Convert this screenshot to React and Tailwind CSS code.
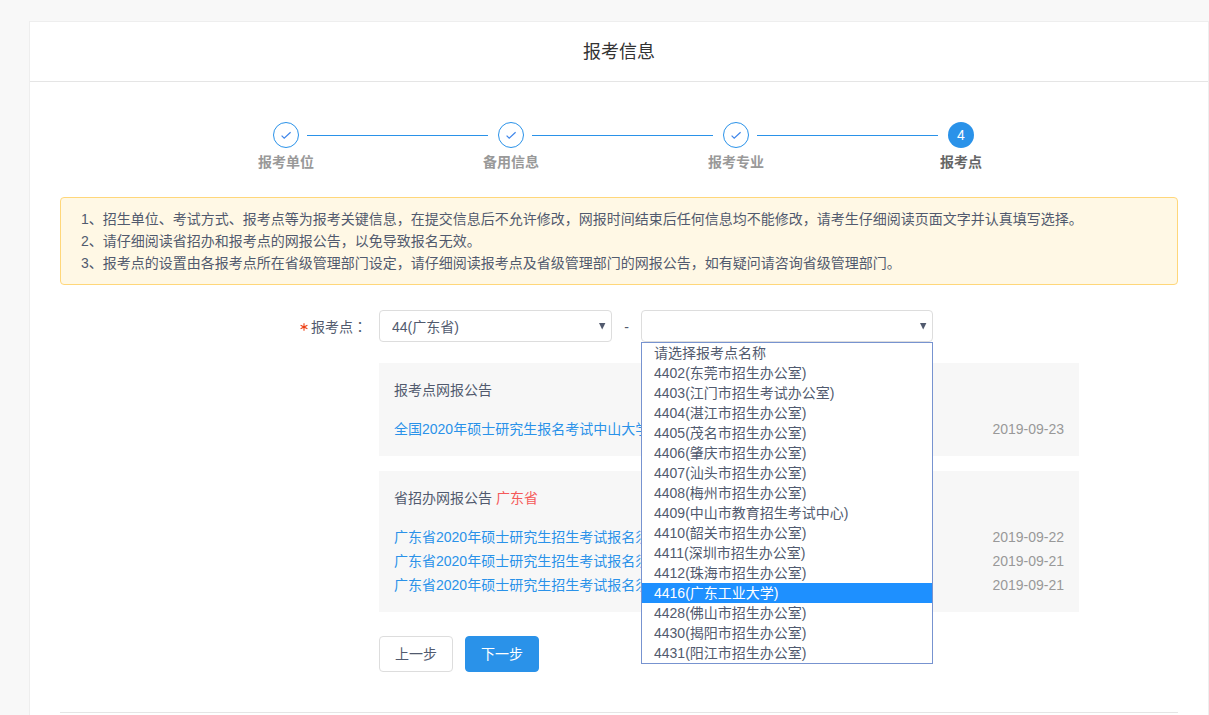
import { useState } from "react";

const steps = [
  { label: "报考单位", done: true },
  { label: "备用信息", done: true },
  { label: "报考专业", done: true },
  { label: "报考点", done: false },
];

const notes = [
  "1、招生单位、考试方式、报考点等为报考关键信息，在提交信息后不允许修改，网报时间结束后任何信息均不能修改，请考生仔细阅读页面文字并认真填写选择。",
  "2、请仔细阅读省招办和报考点的网报公告，以免导致报名无效。",
  "3、报考点的设置由各报考点所在省级管理部门设定，请仔细阅读报考点及省级管理部门的网报公告，如有疑问请咨询省级管理部门。",
];

const sites = [
  "请选择报考点名称",
  "4402(东莞市招生办公室)",
  "4403(江门市招生考试办公室)",
  "4404(湛江市招生办公室)",
  "4405(茂名市招生办公室)",
  "4406(肇庆市招生办公室)",
  "4407(汕头市招生办公室)",
  "4408(梅州市招生办公室)",
  "4409(中山市教育招生考试中心)",
  "4410(韶关市招生办公室)",
  "4411(深圳市招生办公室)",
  "4412(珠海市招生办公室)",
  "4416(广东工业大学)",
  "4428(佛山市招生办公室)",
  "4430(揭阳市招生办公室)",
  "4431(阳江市招生办公室)",
];

const siteNotices = [
  { id: 1, title: "全国2020年硕士研究生报名考试中山大学", date: "2019-09-23" },
];

const provinceNotices = [
  { id: 1, title: "广东省2020年硕士研究生招生考试报名须", date: "2019-09-22" },
  { id: 2, title: "广东省2020年硕士研究生招生考试报名须", date: "2019-09-21" },
  { id: 3, title: "广东省2020年硕士研究生招生考试报名须", date: "2019-09-21" },
];

function Caret() {
  return (
    <svg
      className="pointer-events-none absolute right-1.5 top-3 h-2 w-2"
      viewBox="0 0 8 8"
      aria-hidden="true"
    >
      <path d="M1 1h6.4L4.2 7.4z" fill="#515a6e" />
    </svg>
  );
}

function Step({ step, index, last }) {
  return (
    <li className={last ? "w-14" : "min-w-0 flex-1"}>
      <div className="flex items-center pl-[15px]">
        {step.done ? (
          <span className="flex size-[26px] shrink-0 items-center justify-center rounded-full border border-[#2a92e9]">
            <svg className="h-3 w-3" viewBox="0 0 12 12" fill="none" aria-hidden="true">
              <path d="M1.6 6.6 4.2 9.2 10.6 3.2" stroke="#3f86ea" strokeWidth="1.2" />
            </svg>
          </span>
        ) : (
          <span className="flex size-[26px] shrink-0 items-center justify-center rounded-full bg-[#2a92e9] text-white">
            {index + 1}
          </span>
        )}
        {!last && <span className="-mr-[5px] ml-2 mt-px h-px flex-1 bg-[#2a92e9]" />}
      </div>
      <div
        className={
          last
            ? "mt-1 w-14 whitespace-nowrap text-center font-bold leading-5 text-[#666]"
            : "mt-1 w-14 whitespace-nowrap text-center font-bold leading-5 text-[#999]"
        }
      >
        {step.label}
      </div>
    </li>
  );
}

function Notices({ title, region, items }) {
  return (
    <section className="bg-[#f7f7f7] p-[15px] leading-6">
      <h2>
        {title}
        {region && <span className="text-[#f55a5a]"> {region}</span>}
      </h2>
      <ul className="mt-[15px]">
        {items.map((item) => (
          <li key={item.id} className="flex justify-between gap-4">
            <a href="#" className="truncate text-[#2a92e9]">
              {item.title}
            </a>
            <time className="shrink-0 text-[#999]">{item.date}</time>
          </li>
        ))}
      </ul>
    </section>
  );
}

export default function App() {
  const [site, setSite] = useState("");
  const [active, setActive] = useState(12);

  return (
    <div className="flex min-h-screen flex-col bg-[#f8f8f8] pl-[29px] pt-[21px] font-['Liberation_Sans','Noto_Sans_CJK_SC',sans-serif] text-sm text-[#515a6e]">
      <main className="flex-1 border border-b-0 border-[#eee] bg-white">
        <h1 className="flex h-[60px] items-center justify-center border-b border-[#e5e5e5] text-lg text-[#333]">
          报考信息
        </h1>

        <div className="px-[30px] pt-10">
          <ol className="mx-auto flex max-w-[740px] pl-[9px]">
            {steps.map((step, i) => (
              <Step key={step.label} step={step} index={i} last={i === steps.length - 1} />
            ))}
          </ol>

          <div className="mt-[25px] rounded border border-[#ffd77a] bg-[#fff8e5] px-5 py-2.5 leading-[22px]">
            {notes.map((note) => (
              <p key={note}>{note}</p>
            ))}
          </div>

          <form className="mt-[25px]" onSubmit={(e) => e.preventDefault()}>
            <div className="flex items-center">
              <label
                htmlFor="province"
                className="flex w-[319px] items-center justify-end gap-[3px] pr-3 pt-0.5"
              >
                <svg className="size-2" viewBox="0 0 8 8" aria-hidden="true">
                  <path
                    d="M4 0.3V7.7M0.6 2.2 7.4 5.8M7.4 2.2 0.6 5.8"
                    stroke="#ed3f14"
                    strokeWidth="1.1"
                  />
                </svg>
                <span>
                  报考点
                  <span className="font-['Noto_Sans_CJK_JP',sans-serif] leading-none" lang="ja">
                    ：
                  </span>
                </span>
              </label>
              <div className="relative">
                <select
                  id="province"
                  className="block h-8 w-[233px] appearance-none rounded border border-[#ddd] bg-white px-3 pt-0.5 outline-none"
                >
                  <option>44(广东省)</option>
                </select>
                <Caret />
              </div>
              <span className="w-[29px] pt-0.5 text-center">-</span>
              <div className="relative">
                <select
                  aria-label="报考点名称"
                  value={site}
                  onChange={(e) => setSite(e.target.value)}
                  className="block h-8 w-[292px] appearance-none rounded border border-[#ddd] bg-white px-3 pt-0.5 outline-none"
                >
                  <option value=""></option>
                  {sites.slice(1).map((s) => (
                    <option key={s}>{s}</option>
                  ))}
                </select>
                <Caret />
                <ul
                  role="listbox"
                  aria-label="报考点名称"
                  className="absolute left-0 top-full z-10 w-full border border-[#7793d0] bg-white leading-5"
                >
                  {sites.map((s, i) => (
                    <li
                      key={s}
                      role="option"
                      aria-selected={i === active}
                      onMouseEnter={() => setActive(i)}
                      onClick={() => setSite(i === 0 ? "" : s)}
                      className={
                        i === active ? "bg-[#1e90ff] px-3 text-white" : "px-3"
                      }
                    >
                      {s}
                    </li>
                  ))}
                </ul>
              </div>
            </div>

            <div className="ml-[319px] mt-[21px] flex max-w-[700px] flex-col gap-[15px]">
              <Notices title="报考点网报公告" items={siteNotices} />
              <Notices title="省招办网报公告" region="广东省" items={provinceNotices} />
            </div>

            <div className="ml-[319px] mt-6 flex gap-3">
              <button
                type="button"
                className="h-9 rounded border border-[#ddd] bg-white px-[15px]"
              >
                上一步
              </button>
              <button
                type="submit"
                className="h-9 rounded border border-[#2a92e9] bg-[#2a92e9] px-[15px] text-white"
              >
                下一步
              </button>
            </div>
          </form>

          <hr className="mt-10 border-[#e5e5e5]" />
        </div>
      </main>
    </div>
  );
}
